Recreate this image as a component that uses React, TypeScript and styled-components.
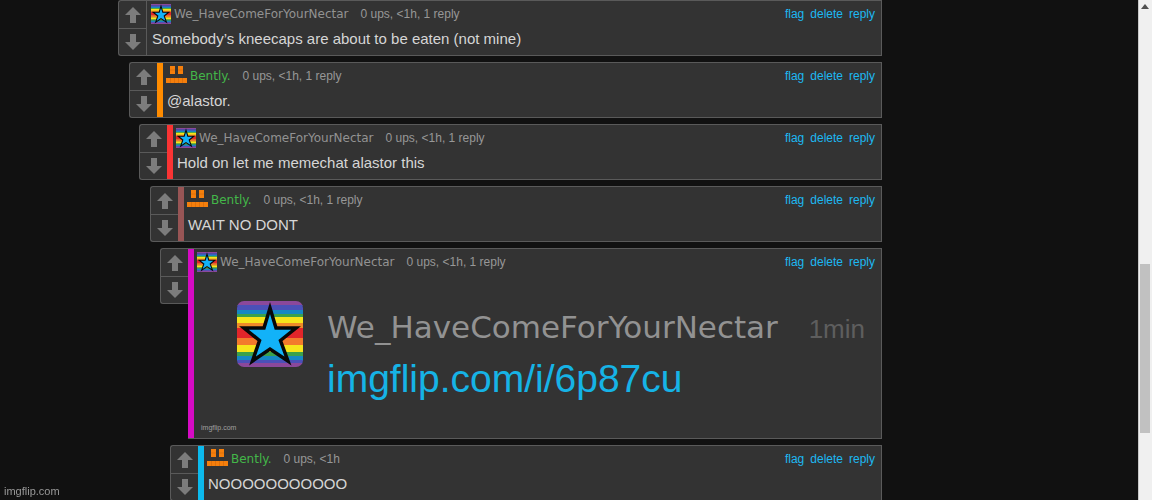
import React from "react";
import styled, { createGlobalStyle } from "styled-components";

const GlobalStyle = createGlobalStyle`
  * { box-sizing: border-box; }
  body {
    margin: 0;
    background: #111;
    font-family: "Liberation Sans", Arial, sans-serif;
    color: #d6d6d6;
    overflow: hidden;
  }
`;

const Page = styled.div`
  display: flex;
  height: 100vh;
  overflow: hidden;
`;

const Main = styled.main`
  flex: 1;
  min-width: 0;
  padding: 0 24px 0 118px;
`;

const Thread = styled.div`
  display: flex;
  flex-direction: column;
  gap: 6px;
  max-width: 764px;
`;

const Comment = styled.article`
  display: flex;
  align-items: flex-start;
`;

const Votes = styled.div`
  flex: none;
  width: 28px;
  border: 1px solid #5a5a5a;
  border-right: 0;
  border-radius: 3px 0 0 3px;
  background: #333;
`;

const VoteButton = styled.button`
  display: flex;
  align-items: center;
  justify-content: center;
  width: 100%;
  height: 27px;
  padding: 0;
  border: 0;
  background: none;
  cursor: pointer;

  & + & {
    border-top: 1px solid #5a5a5a;
  }
`;

const Card = styled.div<{ $bar?: string }>`
  flex: 1;
  min-width: 0;
  min-height: 56px;
  padding: 2px 6px 0 4px;
  border: 1px solid #5a5a5a;
  background: #333;
  ${(p) => p.$bar && `border-left: 0; box-shadow: inset 6px 0 ${p.$bar}; padding-left: 9px;`}
`;

const Header = styled.header`
  display: flex;
  align-items: center;
  height: 22px;
  font-size: 12px;
`;

const UserName = styled.a<{ $color: string }>`
  margin: 0 12px 0 3px;
  font-family: "DejaVu Sans", Verdana, sans-serif;
  font-size: 12px;
  color: ${(p) => p.$color};
  text-decoration: none;
`;

const Meta = styled.span`
  color: #979797;
`;

const Actions = styled.nav`
  display: flex;
  gap: 6px;
  margin-left: auto;
`;

const ActionLink = styled.a`
  color: #1db8f2;
  text-decoration: none;
`;

const Message = styled.p`
  margin: 0;
  padding: 4px 0 0 1px;
  font-size: 15px;
  line-height: 20px;
`;

const Snapshot = styled.div`
  display: flex;
  flex-direction: column;
  height: 165px;
  padding-left: 4px;
`;

const SnapshotRow = styled.div`
  display: flex;
  flex: 1;
  align-items: flex-start;
  padding: 28px 10px 0 36px;
`;

const SnapshotBody = styled.div`
  flex: 1;
  margin-left: 24px;
`;

const SnapshotTop = styled.div`
  display: flex;
  align-items: baseline;
  justify-content: space-between;
  height: 52px;
  line-height: 52px;
`;

const SnapshotName = styled.span`
  font-family: "DejaVu Sans", Verdana, sans-serif;
  font-size: 31px;
  color: #929292;
`;

const SnapshotAge = styled.span`
  font-size: 26px;
  color: #5e5e5e;
`;

const SnapshotLink = styled.a`
  font-size: 39px;
  line-height: 52px;
  color: #16b3e6;
  text-decoration: none;
`;

const SnapshotMark = styled.small`
  padding-bottom: 5px;
  font-size: 7px;
  line-height: 10px;
  color: #a0a0a0;
`;

const Watermark = styled.span`
  position: fixed;
  left: 4px;
  bottom: 2px;
  font-size: 11px;
  line-height: 14px;
  color: #999;
`;

const ScrollTrack = styled.div`
  display: flex;
  flex: none;
  flex-direction: column;
  width: 14px;
  padding: 4px 2px 0 1px;
  border-left: 1px solid #c8c8c8;
  background: #f0f0f0;
`;

const ScrollArrow = styled.svg`
  flex: none;
  align-self: center;
`;

const ScrollThumb = styled.div`
  height: 34%;
  margin-top: 255px;
  background: #c1c1c1;
`;

const Arrow = ({ down }: { down?: boolean }) => (
  <svg width="16" height="18" viewBox="0 0 16 18" aria-hidden="true">
    <path
      fill="#7c7c7c"
      d={down ? "M5 1h6v8h5l-8 8-8-8h5z" : "M5 17h6V9h5L8 1 0 9h5z"}
    />
  </svg>
);

const STRIPES: [number, number, string][] = [
  [0, 4, "#8b489b"],
  [4, 5, "#4b50b8"],
  [9, 4, "#1688c4"],
  [13, 3, "#3ba14b"],
  [16, 6, "#f6e51b"],
  [22, 5, "#f08a28"],
  [27, 10, "#e2252a"],
  [37, 7, "#f37a2c"],
  [44, 7, "#f6e51b"],
  [51, 4, "#3ba14b"],
  [55, 4, "#1688c4"],
  [59, 3, "#4b50b8"],
  [62, 4, "#8b489b"],
];

const StarAvatar = ({ size }: { size: number }) => {
  const large = size > 30;
  return (
    <svg
      width={size}
      height={size}
      viewBox="0 0 66 66"
      style={{ flex: "none", borderRadius: large ? 7 : 0 }}
      role="img"
      aria-label="avatar"
    >
      {STRIPES.map(([y, h, fill]) => (
        <rect key={y} y={y} width="66" height={h + 1} fill={fill} />
      ))}
      <path
        d="M33 7 L39 27 H59 L43.500 39.500 L51 60 L33 48 L15.500 60 L22.500 39.500 L7 27 H27 Z"
        fill="#12b2f8"
        stroke="#080808"
        strokeWidth="3.5"
      />
    </svg>
  );
};

const FaceAvatar = () => (
  <svg width="21" height="20" viewBox="0 0 21 20" style={{ flex: "none" }} role="img" aria-label="avatar">
    <path d="M4 0h5v8H4zM12 0h5v8h-5zM0 12h21v5H0z" fill="#f57f0c" />
    <path
      d="M4 4h5M12 4h5M4.500 12v5M8.500 12v5M12.500 12v5M16.500 12v5"
      stroke="#c9650c"
      strokeWidth="0.5"
    />
  </svg>
);

type Entry = {
  star?: boolean;
  meta: string;
  bar?: string;
  text?: string;
};

const ENTRIES: Entry[] = [
  { star: true, meta: "0 ups, <1h, 1 reply", text: "Somebody’s kneecaps are about to be eaten (not mine)" },
  { meta: "0 ups, <1h, 1 reply", bar: "#ff8c00", text: "@alastor." },
  { star: true, meta: "0 ups, <1h, 1 reply", bar: "#f93434", text: "Hold on let me memechat alastor this" },
  { meta: "0 ups, <1h, 1 reply", bar: "#985555", text: "WAIT NO DONT" },
  { star: true, meta: "0 ups, <1h, 1 reply", bar: "#d60bc4" },
  { meta: "0 ups, <1h", bar: "#0cbaee", text: "NOOOOOOOOOOO" },
];

const INDENT = 10.4;

export default function App() {
  return (
    <Page>
      <GlobalStyle />
      <Main>
        <Thread>
          {ENTRIES.map((e, depth) => (
            <Comment key={depth} style={{ marginLeft: Math.ceil(depth * INDENT) }}>
              <Votes>
                <VoteButton aria-label="Upvote"><Arrow /></VoteButton>
                <VoteButton aria-label="Downvote"><Arrow down /></VoteButton>
              </Votes>
              <Card $bar={e.bar}>
                <Header>
                  {e.star ? <StarAvatar size={20} /> : <FaceAvatar />}
                  <UserName href="#" $color={e.star ? "#929292" : "#43b749"}>
                    {e.star ? "We_HaveComeForYourNectar" : "Bently."}
                  </UserName>
                  <Meta>{e.meta}</Meta>
                  <Actions>
                    <ActionLink href="#">flag</ActionLink>
                    <ActionLink href="#">delete</ActionLink>
                    <ActionLink href="#">reply</ActionLink>
                  </Actions>
                </Header>
                {e.text ? (
                  <Message>{e.text}</Message>
                ) : (
                  <Snapshot>
                    <SnapshotRow>
                      <StarAvatar size={66} />
                      <SnapshotBody>
                        <SnapshotTop>
                          <SnapshotName>We_HaveComeForYourNectar</SnapshotName>
                          <SnapshotAge>1min</SnapshotAge>
                        </SnapshotTop>
                        <SnapshotLink href="#">imgflip.com/i/6p87cu</SnapshotLink>
                      </SnapshotBody>
                    </SnapshotRow>
                    <SnapshotMark>imgflip.com</SnapshotMark>
                  </Snapshot>
                )}
              </Card>
            </Comment>
          ))}
        </Thread>
      </Main>
      <ScrollTrack>
        <ScrollArrow width="8" height="5" viewBox="0 0 8 5" aria-hidden="true">
          <path d="M4 0l4 5H0z" fill="#505050" />
        </ScrollArrow>
        <ScrollThumb />
      </ScrollTrack>
      <Watermark>imgflip.com</Watermark>
    </Page>
  );
}
